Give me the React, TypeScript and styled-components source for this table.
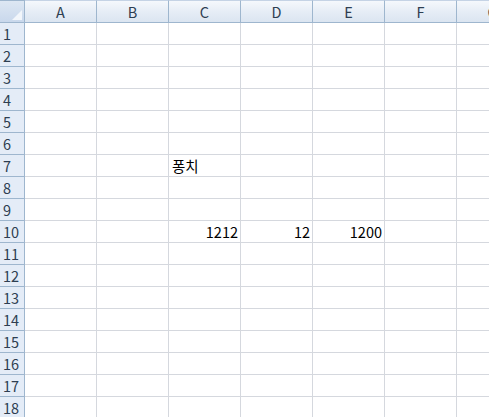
import React from "react";
import styled, { createGlobalStyle } from "styled-components";

const Global = createGlobalStyle`
  html, body { margin: 0; padding: 0; background: #fff; overflow: hidden; }
  body { font-family: "Noto Sans CJK KR", "Noto Sans", sans-serif; }
`;

const Sheet = styled.div`
  width: 489px;
  height: 417px;
  overflow: hidden;
  background: #fff;
`;

const Grid = styled.div`
  display: grid;
  grid-template-columns: 25px repeat(7, 72px);
  grid-template-rows: 23px repeat(18, 22px);
  width: max-content;
`;

const Corner = styled.div`
  box-sizing: border-box;
  border-right: 1px solid #9eb6ce;
  border-bottom: 1px solid #9eb6ce;
  border-top: 1px solid #9eb6ce;
  background: linear-gradient(#dde7f3, #c9d8ec);
  position: relative;
`;

const CornerTri = styled.svg`
  position: absolute;
  right: 2px;
  bottom: 2px;
`;

const ColHead = styled.div`
  box-sizing: border-box;
  border-right: 1px solid #9eb6ce;
  border-bottom: 1px solid #9eb6ce;
  border-top: 1px solid #c5d3e5;
  background: linear-gradient(#f5f8fc 0%, #e6edf6 50%, #dbe5f1 100%);
  display: flex;
  align-items: center;
  justify-content: center;
  font-size: 14.5px;
  color: #2e3e51;
  line-height: 1;
  padding-top: 2px;
`;

const RowHead = styled.div`
  box-sizing: border-box;
  border-right: 1px solid #9eb6ce;
  border-bottom: 1px solid #9eb6ce;
  background: #e4ecf7;
  display: flex;
  align-items: center;
  justify-content: flex-start;
  padding: 2px 0 0 3px;
  font-size: 14.5px;
  color: #2e3e51;
  line-height: 1;
`;

const Cell = styled.div<{ $align?: "left" | "right" }>`
  box-sizing: border-box;
  border-right: 1px solid #d5d8de;
  border-bottom: 1px solid #d5d8de;
  display: flex;
  align-items: center;
  justify-content: ${(p) => (p.$align === "right" ? "flex-end" : "flex-start")};
  padding: 2px 2px 0 3px;
  font-size: 14.5px;
  color: #000;
  line-height: 1;
  white-space: nowrap;
`;

const cols = ["A", "B", "C", "D", "E", "F", "G"];

const data: Record<string, { v: string; align: "left" | "right" }> = {
  "7-C": { v: "퐁치", align: "left" },
  "10-C": { v: "1212", align: "right" },
  "10-D": { v: "12", align: "right" },
  "10-E": { v: "1200", align: "right" },
};

export default function App() {
  const rows = Array.from({ length: 18 }, (_, i) => i + 1);
  return (
    <Sheet>
      <Global />
      <Grid>
        <Corner>
          <CornerTri width="10" height="10" viewBox="0 0 10 10">
            <polygon points="10,0 10,10 0,10" fill="#f2f6fb" />
          </CornerTri>
        </Corner>
        {cols.map((c) => (
          <ColHead key={c}>{c}</ColHead>
        ))}
        {rows.map((r) => (
          <React.Fragment key={r}>
            <RowHead>{r}</RowHead>
            {cols.map((c) => {
              const d = data[`${r}-${c}`];
              return (
                <Cell key={c} $align={d?.align}>
                  {d?.v}
                </Cell>
              );
            })}
          </React.Fragment>
        ))}
      </Grid>
    </Sheet>
  );
}
